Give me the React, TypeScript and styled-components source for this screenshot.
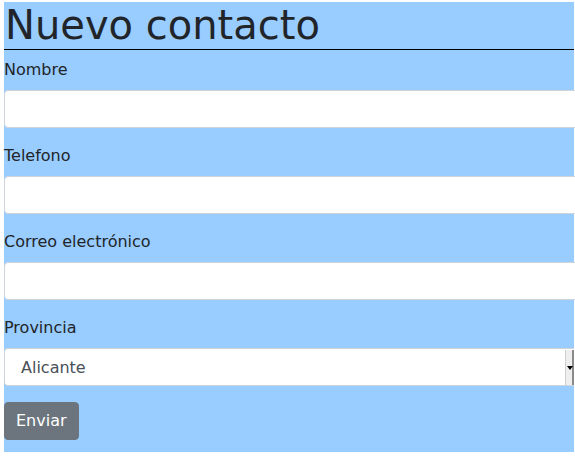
import React from "react";
import styled, { createGlobalStyle } from "styled-components";

const Global = createGlobalStyle`
  html, body { margin: 0; padding: 0; background: #ffffff; overflow: hidden; }
  body { font-family: "DejaVu Sans", sans-serif; color: #212529; }
  * { box-sizing: border-box; }
`;

const Panel = styled.form`
  margin: 2px 0 0 4px;
  width: 570px;
  background: #99ccff;
  padding-bottom: 12px;
  display: flex;
  flex-direction: column;
`;

const Title = styled.h1`
  margin: 0 0 8px;
  font-size: 40px;
  font-weight: 400;
  line-height: 47px;
  color: #212529;
  border-bottom: 1px solid #000000;
  padding-left: 1px;
`;

const Group = styled.div`
  display: flex;
  flex-direction: column;
  margin-bottom: 16px;
`;

const Label = styled.label`
  font-size: 16px;
  line-height: 24px;
  margin-bottom: 8px;
  color: #212529;
`;

const Input = styled.input`
  height: 38px;
  width: calc(100% + 10px);
  border: 1px solid #ced4da;
  border-radius: 4px;
  background: #ffffff;
  padding: 6px 12px;
  font: inherit;
  font-size: 16px;
  outline: none;
`;

const SelectBox = styled.div`
  position: relative;
  height: 38px;
  width: 100%;
  border: 1px solid #ced4da;
  border-right: none;
  border-radius: 4px 0 0 4px;
  background: #ffffff;
  padding: 0 16px;
  display: flex;
  align-items: center;
  font-size: 16px;
  color: #495057;
`;

const Spinner = styled.div`
  position: absolute;
  right: 0;
  top: 1px;
  bottom: 0;
  width: 9px;
  background: #eeeeee;
  border-left: 1px solid #cfcfcf;
  border-right: 2px solid #8a8a8a;
  display: flex;
  align-items: center;
  justify-content: center;
`;

const Arrow = styled.span`
  width: 0;
  height: 0;
  border-left: 3px solid transparent;
  border-right: 3px solid transparent;
  border-top: 4px solid #000000;
  margin-left: 1px;
`;

const Button = styled.button`
  align-self: flex-start;
  height: 38px;
  padding: 6px 11px;
  border: 1px solid #6c757d;
  border-radius: 4px;
  background: #6c757d;
  color: #ffffff;
  font-family: "DejaVu Sans", sans-serif;
  font-size: 16px;
  line-height: 24px;
  cursor: pointer;
`;

const fields = ["Nombre", "Telefono", "Correo electrónico"];

export default function App() {
  return (
    <>
      <Global />
      <Panel onSubmit={(e) => e.preventDefault()}>
        <Title>Nuevo contacto</Title>
        {fields.map((f) => (
          <Group key={f}>
            <Label>{f}</Label>
            <Input type="text" />
          </Group>
        ))}
        <Group>
          <Label>Provincia</Label>
          <SelectBox>
            Alicante
            <Spinner>
              <Arrow />
            </Spinner>
          </SelectBox>
        </Group>
        <Button type="submit">Enviar</Button>
      </Panel>
    </>
  );
}
